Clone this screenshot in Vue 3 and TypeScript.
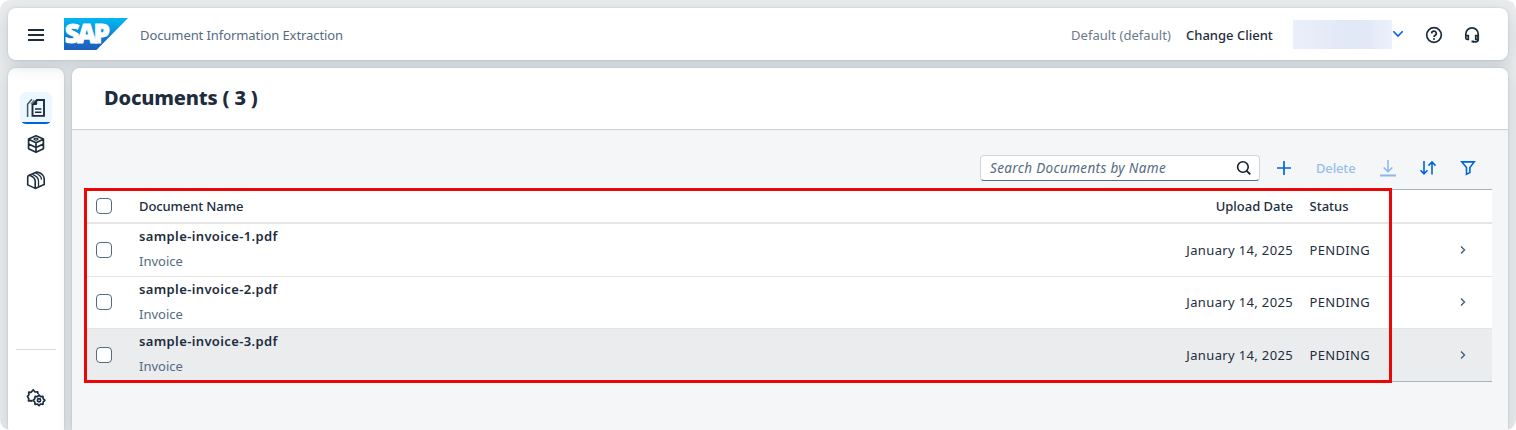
<script setup lang="ts">
interface DocumentRow {
  name: string
  type: string
  date: string
  status: string
  hovered: boolean
}

const rows: DocumentRow[] = [1, 2, 3].map((n) => ({
  name: `sample-invoice-${n}.pdf`,
  type: 'Invoice',
  date: 'January 14, 2025',
  status: 'PENDING',
  hovered: n === 3,
}))
</script>

<template>
  <div class="shell">
    <header class="shellbar">
      <svg class="menu" width="16" height="14" viewBox="0 0 16 14"><path d="M0 2h16M0 7h16M0 12h16" stroke="#1d2d3e" stroke-width="2" /></svg>
      <svg class="logo" width="64" height="32" viewBox="0 0 64 32">
        <defs>
          <linearGradient id="sapBlue" x1="0" y1="0" x2="0" y2="1">
            <stop offset="0" stop-color="#00b8f1" />
            <stop offset="0.3" stop-color="#06a0e2" />
            <stop offset="0.65" stop-color="#1273cc" />
            <stop offset="1" stop-color="#1f5fbb" />
          </linearGradient>
        </defs>
        <path d="M0 0h64L32.500 32H0z" fill="url(#sapBlue)" />
        <text y="25.300" class="logo-text"><tspan x="0.800">S</tspan><tspan x="13.300">A</tspan><tspan x="29.500">P</tspan></text>
      </svg>
      <span class="app-title">Document Information Extraction</span>
      <div class="shell-actions">
        <span class="client">Default (default)</span>
        <span class="change">Change Client</span>
        <div class="user"></div>
        <svg class="chev" width="12" height="8" viewBox="0 0 12 8"><path d="M1.300 1.300 6 6l4.700-4.700" fill="none" stroke="#0064d9" stroke-width="1.600" /></svg>
        <svg class="help" width="18" height="18" viewBox="0 0 18 18" fill="none" stroke="#1d2d3e" stroke-width="1.700">
          <circle cx="9" cy="9" r="7.300" />
          <path d="M6.700 7.500a2.300 2.200 0 1 1 3.500 1.700c-.8.500-1.200.8-1.200 1.700" />
          <circle cx="9" cy="12.900" r="1" fill="#1d2d3e" stroke="none" />
        </svg>
        <svg class="headset" width="18" height="18" viewBox="0 0 18 18" fill="none" stroke="#1d2d3e" stroke-width="1.700">
          <path d="M2.800 9.500V8a6.200 6.200 0 0 1 12.400 0v5.500c0 1.700-1 2.300-2.500 2.300H10" />
          <path d="M2.800 9.600h2.500v3.700H4.100a1.300 1.300 0 0 1-1.300-1.300zM15.200 9.600h-2.500v3.700h2.500z" />
          <path d="M8.500 15.500h2.500" stroke-width="2" />
        </svg>
      </div>
    </header>

    <div class="body">
      <nav class="side">
        <div class="nav-item selected">
          <svg width="20" height="20" viewBox="0 0 20 20" fill="none" stroke="#1d2d3e">
            <path d="M1.600 19V6.300L5.800 1.300" stroke-width="1.500" opacity=".8" />
            <path d="M5 6.200 8.300 2" stroke-width="1.400" opacity=".6" />
            <path d="M11 2h7v15.900H6.500V6.900z" stroke-width="1.900" />
            <path d="M6.500 6.900h4L11.200 6V2z" fill="#1d2d3e" stroke="none" />
            <path d="M9 11H15.400M9 14.300H15.400" stroke-width="1.500" />
          </svg>
        </div>
        <div class="nav-item">
          <svg width="20" height="20" viewBox="0 0 20 20" fill="none" stroke="#1d2d3e" stroke-width="1.700" stroke-linejoin="round">
            <path d="M10 1.800 17.400 5v9.800L10 18.200 2.600 14.800V5zM2.600 5.300 10 8.800 17.400 5.300M10 8.800v9.400M2.600 10l7.400 3.500 7.400-3.500" />
            <ellipse cx="10" cy="5.100" rx="2" ry="1" stroke-width="1.300" />
          </svg>
        </div>
        <div class="nav-item">
          <svg width="20" height="20" viewBox="0 0 20 20" fill="none" stroke="#1d2d3e" stroke-width="1.600" stroke-linejoin="round">
            <path d="M9.200 18.400 1.700 14.900V7.500c0-2 1.300-2.600 3-1.800 3 1.200 4.500 3.300 4.500 5.800z" />
            <path d="M3.300 5.300 10.800 2.100c4 .5 7.400 3 7.400 6.900v5.600l-9 3.800" />
            <path d="M6.500 4.300c3.800 1.500 6 3.700 6 6.700v5.600M9.500 3c3.800 1.500 6 3.700 6 6.700" stroke-width="1.300" />
          </svg>
        </div>
        <div class="nav-line"></div>
        <div class="nav-item settings">
          <svg width="20" height="20" viewBox="0 0 20 20" fill="none" stroke="#1d2d3e" stroke-width="1.700" stroke-linejoin="round">
            <path d="M6.500 13.500 5 12.600 2.500 12.900 2.700 10.500 1.400 8.300 2.900 6.800 2.700 4.200 5.200 4.300 7.200 1.800 9.100 4 11.700 3.800 11.900 6" />
            <path d="m13 6.900 1.500 1.700 2.400-.3.300 2.300 1.700 1.700-1.700 1.700-.3 2.300-2.400-.3-1.500 1.700-1.500-1.700-2.400.3-.3-2.300-1.700-1.700 1.700-1.700.3-2.300 2.400.3z" />
            <circle cx="13" cy="12.300" r="1.600" />
          </svg>
        </div>
      </nav>

      <main class="main">
        <div class="page-head"><h1>Documents ( 3 )</h1></div>
        <div class="toolbar">
          <div class="search">
            <span>Search Documents by Name</span>
            <svg width="16" height="16" viewBox="0 0 16 16" fill="none" stroke="#131e29" stroke-width="1.600"><circle cx="6.900" cy="7" r="5.300" /><path d="m10.700 10.800 3.600 3.600" stroke-width="1.800" /></svg>
          </div>
          <svg class="add" width="16" height="16" viewBox="0 0 16 16"><path d="M8 1v14M1 8h14" stroke="#0064d9" stroke-width="1.700" /></svg>
          <span class="delete">Delete</span>
          <svg class="download" width="16" height="17" viewBox="0 0 16 17" fill="none" stroke="#0064d9" opacity=".42"><path d="M8 0v11.500M3.700 7.500 8 11.700l4.300-4.200" stroke-width="1.500" /><path d="M0 15.500h16" stroke-width="2" /></svg>
          <svg class="sort" width="18" height="16" viewBox="0 0 18 16" fill="none" stroke="#0064d9" stroke-width="1.600"><path d="M5 1v13M1.500 10.300 5 13.900l3.500-3.600M13 14.500V2M9.500 5.600 13 2l3.500 3.600" /></svg>
          <svg class="filter" width="16" height="16" viewBox="0 0 16 16" fill="none" stroke="#0064d9" stroke-width="1.600"><path d="M1.800 1.900h12.400L9.900 7.600v5L6.500 14.300V7.600z" /></svg>
        </div>

        <div class="table">
          <div class="row head">
            <i class="check"></i>
            <span class="name-col">Document Name</span>
            <span class="date upload">Upload Date</span>
            <span class="status stat-head">Status</span>
          </div>
          <div v-for="row in rows" :key="row.name" class="row item" :class="{ hovered: row.hovered }">
            <i class="check"></i>
            <div class="name-col doc">
              <b>{{ row.name }}</b>
              <span>{{ row.type }}</span>
            </div>
            <span class="date">{{ row.date }}</span>
            <span class="status">{{ row.status }}</span>
            <svg class="arrow" width="8" height="10" viewBox="0 0 8 10"><path d="m2 1.500 3.500 3.500L2 8.500" fill="none" stroke="#475e75" stroke-width="1.400" /></svg>
          </div>
          <div class="highlight"></div>
        </div>
      </main>
    </div>
  </div>
</template>

<style>
body { margin: 0; background: #fff; overflow: hidden; }
</style>

<style scoped>
* { box-sizing: border-box; }
svg { display: block; flex: none; overflow: visible; }
.shell {
  height: 430px;
  overflow: hidden;
  border-radius: 10px;
  background: #e9ebec;
  padding: 8px 8px 0;
  font: 14px/20px "Noto Sans", "Open Sans", sans-serif;
  color: #1d2d3e;
  white-space: nowrap;
}
.shellbar {
  position: relative;
  height: 52px;
  border-radius: 8px;
  background: #fff;
  display: flex;
  align-items: center;
  padding: 0 27px 0 20px;
  box-shadow: 0 0 2px rgba(34, 53, 72, .2), 0 6px 16px rgba(34, 63, 90, .16);
}
.menu { margin-top: 2px; }
.logo { margin-left: 20px; }
.logo-text { font: 800 26px "Open Sans", sans-serif; fill: #fff; stroke: #fff; stroke-width: .8; }
.app-title { margin: 2px 0 0 12px; color: #556b82; font-size: 13px; letter-spacing: -.08px; }
.shell-actions { display: flex; align-items: center; margin-left: auto; font-size: 13px; }
.client { width: 102px; color: #6a7a8c; margin-top: 2px; letter-spacing: .05px; }
.change { width: 88px; margin: 2px 0 0 13px; font-weight: 500; }
.user { width: 99px; height: 29px; margin-left: 19px; background: linear-gradient(90deg, #ebeffa, #e1e8f6 55%, #e2e9f6 75%, #ecf0fb); }
.help { margin: 2px 0 0 21px; }
.headset { margin: 2px 0 0 20px; }
.body { display: flex; gap: 8px; margin-top: 8px; height: 362px; }
.side, .main { background: #fff; border-radius: 8px 8px 0 0; box-shadow: 0 0 2px rgba(34, 53, 72, .2), 0 4px 16px rgba(34, 63, 90, .16); }
.side { width: 56px; flex: none; display: flex; flex-direction: column; align-items: center; padding-top: 24px; }
.nav-item { width: 32px; height: 32px; margin-bottom: 4px; display: flex; align-items: center; justify-content: center; flex: none; }
.selected { background: linear-gradient(#0064d9, #0064d9) bottom / 28px 2px no-repeat, #ebf8ff; border-radius: 6px; }
.nav-line { width: 40px; height: 1px; background: #d9d9d9; margin-top: auto; }
.settings { margin: 32px 0 16px; }
.main { flex: 1; background: #f5f6f7; overflow: hidden; position: relative; }
.page-head { height: 61px; background: #fff; padding: 15px 32px; box-shadow: 0 1px 1px #cfd3d7; }
h1 { margin: 0; font: 800 20px/30px "Noto Sans", sans-serif; letter-spacing: -.17px; }
.toolbar { display: flex; align-items: center; height: 26px; margin: 26px 16px 0 0; justify-content: flex-end; }
.search { width: 280px; height: 26px; background: #fff; border: 1px solid #d1d6dc; border-bottom-color: #556b82; border-radius: 4px; display: flex; align-items: center; justify-content: space-between; padding: 0 7px 0 9px; color: #556b82; font-size: 13.5px; letter-spacing: .35px; font-style: italic; }
.add { margin-left: 16px; }
.delete { margin-left: 24px; width: 41px; font-size: 13px; letter-spacing: -.15px; color: #96bfec; font-weight: 500; }
.download { margin-left: 23px; }
.sort { margin-left: 23px; }
.filter { margin: 0 16px 0 23px; }
.table { position: relative; margin: 8px 16px 0 15px; border-top: 1px solid #a8b3bd; border-bottom: 1px solid #a8b3bd; background: #fff; }
.row { display: flex; align-items: center; font-size: 13px; padding-right: 25px; }
.head { height: 34px; border-bottom: 2px solid #e5e5e5; font-weight: 500; }
.head .name-col { letter-spacing: -.1px; }
.item { height: 53px; border-bottom: 1px solid #e5e5e5; }
.item:nth-child(3) { height: 52px; padding-bottom: 1px; }
.hovered { height: 52px; background: #eaecee; border-bottom: 0; }
.check { width: 16px; height: 16px; border: 1px solid #556b82; border-radius: 4px; margin-left: 9px; background: #fff; flex: none; }
.name-col { margin-left: 27px; flex: 1; }
.doc { display: flex; flex-direction: column; gap: 5px; color: #556b82; align-self: flex-start; padding-top: 2px; }
.doc b { font-weight: 600; color: #1d2d3e; letter-spacing: .37px; }
.item .date, .item .status { letter-spacing: .35px; }
.date { width: 140px; text-align: right; }
.status { margin: 0 81.5px 0 16.500px; width: 68px; }
.arrow { width: 8px; }
.head .status { margin-right: 89.5px; }
.highlight { position: absolute; left: -3px; top: -2px; width: 1308px; height: 195px; border: 3px solid #ea0707; }
</style>
